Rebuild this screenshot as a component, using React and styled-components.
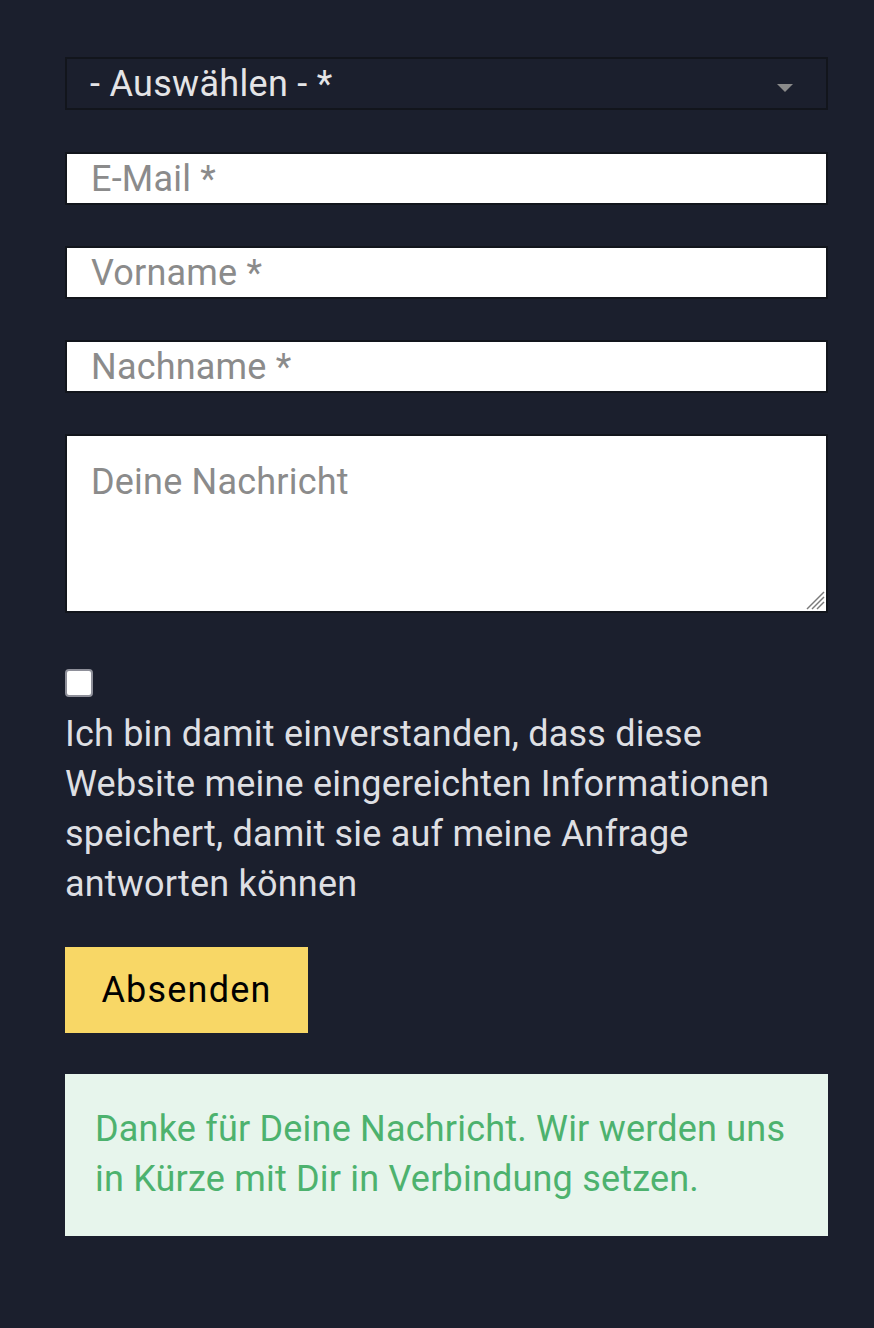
import React from "react";
import styled, { createGlobalStyle } from "styled-components";

const GlobalStyle = createGlobalStyle`
  html, body {
    margin: 0;
    padding: 0;
    background: #1b1f2d;
  }
  body {
    font-family: Roboto, "Liberation Sans", sans-serif;
  }
`;

const Page = styled.div`
  min-height: 1328px;
  background: #1b1f2d;
  padding: 57px 46px 0 65px;
  box-sizing: border-box;
  letter-spacing: 0.2px;
`;

const Form = styled.form`
  display: flex;
  flex-direction: column;
  width: 763px;
`;

const SelectWrap = styled.div`
  position: relative;
  height: 53px;
  margin-bottom: 42px;
`;

const Select = styled.select`
  appearance: none;
  width: 100%;
  height: 100%;
  box-sizing: border-box;
  background: #1b1f2d;
  border: 2px solid #12151c;
  color: #e4e4e6;
  font-family: Roboto, "Liberation Sans", sans-serif;
  font-size: 36px;
  letter-spacing: 0.3px;
  padding: 0 0 0 23px;
  outline: none;
`;

const Caret = styled.span`
  position: absolute;
  right: 35px;
  top: 27px;
  width: 0;
  height: 0;
  border-left: 8px solid transparent;
  border-right: 8px solid transparent;
  border-top: 8px solid #8a8a8a;
  pointer-events: none;
`;

const Input = styled.input`
  height: 53px;
  box-sizing: border-box;
  border: 2px solid #12151c;
  background: #fff;
  font-family: Roboto, "Liberation Sans", sans-serif;
  font-size: 36px;
  letter-spacing: 0.2px;
  padding: 0 24px;
  margin-bottom: 41px;
  outline: none;
  &::placeholder {
    color: #8b8b8b;
  }
`;

const AreaWrap = styled.div`
  position: relative;
  height: 179px;
  margin-bottom: 56px;
`;

const TextArea = styled.textarea`
  display: block;
  width: 100%;
  height: 100%;
  box-sizing: border-box;
  border: 2px solid #12151c;
  background: #fff;
  font-family: Roboto, "Liberation Sans", sans-serif;
  font-size: 36px;
  letter-spacing: 0.2px;
  line-height: 44px;
  padding: 24px 24px;
  margin: 0;
  resize: none;
  outline: none;
  &::placeholder {
    color: #8b8b8b;
  }
`;

const Grip = styled.svg`
  position: absolute;
  right: 3px;
  bottom: 3px;
  width: 20px;
  height: 20px;
  pointer-events: none;
`;

const Checkbox = styled.input`
  appearance: none;
  width: 28px;
  height: 28px;
  margin: 0 0 12px 0;
  background: #fff;
  border: 2px solid #8e8f99;
  border-radius: 4px;
  box-sizing: border-box;
`;

const Consent = styled.label`
  color: #dedfe3;
  font-size: 36px;
  line-height: 50px;
  margin-bottom: 38px;
`;

const Submit = styled.button`
  align-self: flex-start;
  width: 243px;
  height: 86px;
  background: #f8d766;
  border: none;
  border-radius: 0;
  color: #000;
  font-family: Roboto, "Liberation Sans", sans-serif;
  font-size: 36px;
  letter-spacing: 1.2px;
  margin-bottom: 41px;
  cursor: pointer;
`;

const Success = styled.div`
  background: #e7f5ec;
  color: #4db26e;
  font-size: 36px;
  line-height: 50px;
  padding: 30px 30px 32px;
`;

export default function App() {
  return (
    <>
      <GlobalStyle />
      <Page>
        <Form onSubmit={(e) => e.preventDefault()}>
          <SelectWrap>
            <Select defaultValue="">
              <option value="">- Auswählen - *</option>
            </Select>
            <Caret />
          </SelectWrap>
          <Input type="email" placeholder="E-Mail *" />
          <Input type="text" placeholder="Vorname *" />
          <Input type="text" placeholder="Nachname *" />
          <AreaWrap>
            <TextArea placeholder="Deine Nachricht" />
            <Grip viewBox="0 0 20 20">
              <g stroke="#7a7a7a" strokeWidth="1.5">
                <line x1="2" y1="19" x2="19" y2="2" />
                <line x1="7" y1="19" x2="19" y2="7" />
                <line x1="12" y1="19" x2="19" y2="12" />
              </g>
            </Grip>
          </AreaWrap>
          <Checkbox type="checkbox" id="consent" />
          <Consent htmlFor="consent">
            Ich bin damit einverstanden, dass diese Website meine eingereichten
            Informationen speichert, damit sie auf meine Anfrage antworten
            können
          </Consent>
          <Submit type="submit">Absenden</Submit>
          <Success>
            Danke für Deine Nachricht. Wir werden uns in Kürze mit Dir in
            Verbindung setzen.
          </Success>
        </Form>
      </Page>
    </>
  );
}
